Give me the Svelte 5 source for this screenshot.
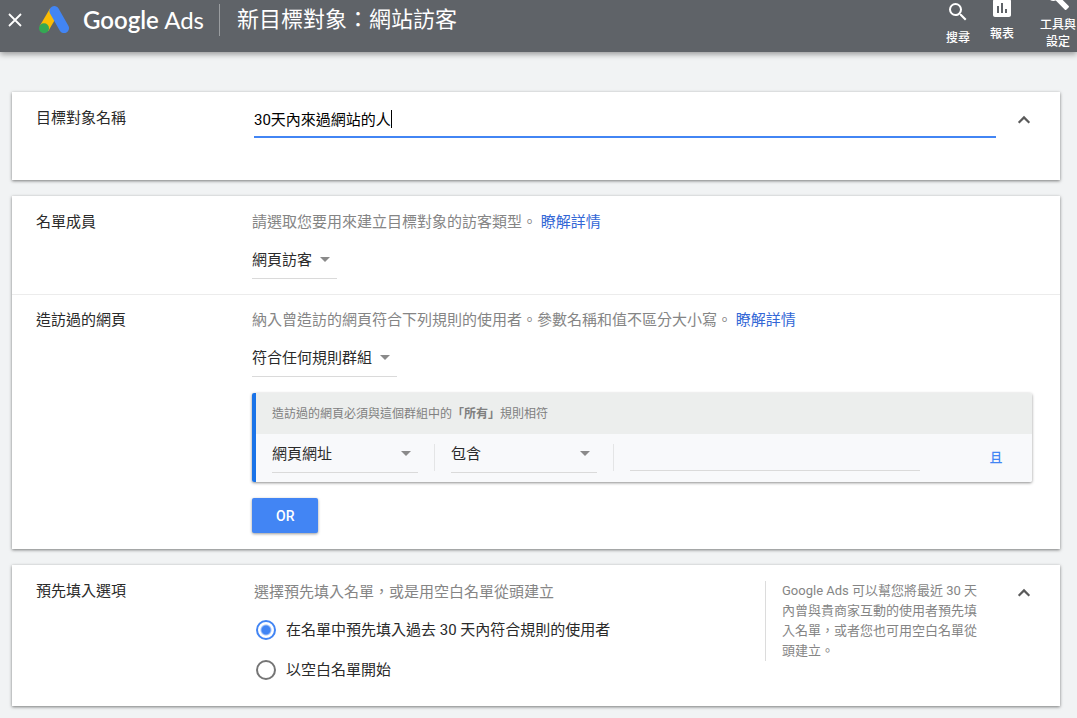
<script>
  let name = $state('30天內來過網站的人');
  let prefill = $state('past');
  let ruleValue = $state('');

  // collapsible cards
  let nameOpen = $state(true);
  let prefillOpen = $state(true);

  const prefillOptions = [
    { value: 'past', label: '在名單中預先填入過去 30 天內符合規則的使用者' },
    { value: 'empty', label: '以空白名單開始' }
  ];
</script>

{#snippet chevron()}
  <svg width="24" height="24" viewBox="0 0 24 24" aria-hidden="true">
    <path d="M6.700 14.700L12 9.400l5.300 5.300" fill="none" stroke="#5a5a5a" stroke-width="2.200" />
  </svg>
{/snippet}

{#snippet select(id, label, text, wide)}
  <div class="select" class:wide>
    <select {id} aria-label={label}>
      <option>{text}</option>
    </select>
    <svg class="arrow" width="10" height="5" viewBox="0 0 10 5" aria-hidden="true">
      <path d="M0 0h10L5 5z" fill="#8a8a8a" />
    </svg>
  </div>
{/snippet}

<header>
  <button class="close" aria-label="關閉">
    <svg width="14" height="14" viewBox="0 0 14 14">
      <path d="M1 1l12 12M13 1L1 13" stroke="#fff" stroke-width="1.8" />
    </svg>
  </button>
  <svg class="logo" width="30" height="28" viewBox="0 0 30 28" aria-hidden="true">
    <path d="M15.300 5L5 22.500" stroke="#fbbc04" stroke-width="10" />
    <path d="M15.300 5L25.100 22.200" stroke="#4285f4" stroke-width="9.800" stroke-linecap="round" />
    <circle cx="5" cy="22.300" r="5" fill="#34a853" />
  </svg>
  <span class="brand"><b>Google</b> Ads</span>
  <h1>新目標對象：網站訪客</h1>
  <nav>
    <button class="tool search">
      <svg width="24" height="24" viewBox="0 0 24 24">
        <path fill="#fff" d="M15.500 14h-.79l-.28-.27A6.471 6.471 0 0 0 16 9.500 6.500 6.500 0 1 0 9.500 16c1.610 0 3.090-.59 4.230-1.570l.27.28v.79l5 4.990L20.490 19l-4.990-5zm-6 0C7.010 14 5 11.990 5 9.500S7.010 5 9.500 5 14 7.010 14 9.500 11.990 14 9.500 14z" />
      </svg>
      <span>搜尋</span>
    </button>
    <button class="tool">
      <svg width="24" height="24" viewBox="0 0 24 24">
        <path fill="#fff" d="M19 3H5c-1.100 0-2 .9-2 2v14c0 1.100.9 2 2 2h14c1.100 0 2-.9 2-2V5c0-1.100-.9-2-2-2zM9 17H7v-7h2v7zm4 0h-2V7h2v10zm4 0h-2v-4h2v4z" />
      </svg>
      <span>報表</span>
    </button>
    <button class="tool last">
      <svg width="24" height="24" viewBox="0 0 24 24">
        <path fill="#fff" d="M22.700 19l-9.100-9.100c.9-2.300.4-5-1.500-6.900-2-2-5-2.400-7.400-1.300L9 6 6 9 1.600 4.700C.4 7.100.9 10.100 2.900 12.100c1.900 1.900 4.600 2.400 6.900 1.500l9.100 9.100c.4.4 1 .4 1.400 0l2.300-2.300c.5-.4.5-1.100.1-1.400z" />
      </svg>
      <span>工具與<br />設定</span>
    </button>
  </nav>
</header>

<main>
  <section class="card name-card">
    <div class="row">
      <label class="label" for="name">目標對象名稱</label>
      <div class="content indent">
        {#if nameOpen}
          <div class="name-field">
            <input id="name" type="text" bind:value={name} />
            <span class="caret"></span>
          </div>
        {/if}
      </div>
      <button class="toggle" aria-label="收合" onclick={() => (nameOpen = !nameOpen)}>
        {@render chevron()}
      </button>
    </div>
  </section>

  <section class="card">
    <div class="row">
      <label class="label" for="members">名單成員</label>
      <div class="content">
        <p class="hint">請選取您要用來建立目標對象的訪客類型。 <a href="#members">瞭解詳情</a></p>
        {@render select('members', '名單成員', '網頁訪客', false)}
      </div>
    </div>
    <div class="row divided">
      <label class="label" for="pages">造訪過的網頁</label>
      <div class="content">
        <p class="hint">納入曾造訪的網頁符合下列規則的使用者。參數名稱和值不區分大小寫。 <a href="#pages">瞭解詳情</a></p>
        {@render select('pages', '造訪過的網頁', '符合任何規則群組', false)}

        <div class="group">
          <div class="group-head">造訪過的網頁必須與這個群組中的<b>「所有」</b>規則相符</div>
          <div class="rule">
            {@render select('field', '欄位', '網頁網址', true)}
            <span class="sep"></span>
            {@render select('operator', '運算子', '包含', true)}
            <span class="sep"></span>
            <input class="rule-value" type="text" aria-label="值" bind:value={ruleValue} />
            <button class="and">且</button>
          </div>
        </div>
        <button class="or">OR</button>
      </div>
    </div>
  </section>

  <section class="card prefill-card">
    <div class="row">
      <div class="label">預先填入選項</div>
      <div class="content indent">
        {#if prefillOpen}
          <div class="prefill">
            <div class="choices">
              <p class="hint">選擇預先填入名單，或是用空白名單從頭建立</p>
              {#each prefillOptions as option}
                <label class="choice">
                  <input type="radio" name="prefill" value={option.value} bind:group={prefill} />
                  {option.label}
                </label>
              {/each}
            </div>
            <aside>Google Ads 可以幫您將最近 30 天內曾與貴商家互動的使用者預先填入名單，或者您也可用空白名單從頭建立。</aside>
          </div>
        {/if}
      </div>
      <button class="toggle" aria-label="收合" onclick={() => (prefillOpen = !prefillOpen)}>
        {@render chevron()}
      </button>
    </div>
  </section>
</main>

<style>
  :global(body) {
    background: #f1f3f4;
    color: #2a2a2a;
    font: 15px/20px Roboto, 'Noto Sans CJK TC', sans-serif;
    overflow-x: hidden;
  }
  button,
  input,
  select {
    font: inherit;
    color: inherit;
    background: none;
    border: none;
    border-radius: 0;
    margin: 0;
    padding: 0;
    outline: none;
  }
  button {
    cursor: pointer;
  }
  svg {
    display: block;
  }
  p {
    margin: 0;
  }

  /* top bar */
  header {
    display: flex;
    align-items: center;
    box-sizing: border-box;
    height: 52px;
    padding: 0 0 12px 8px;
    overflow: clip;
    overflow-clip-margin: 12px;
    background: #5f6368;
    color: #fff;
    box-shadow: 0 2px 6px rgba(0, 0, 0, 0.4);
  }
  .logo {
    margin: 0 14px 0 17px;
    flex: none;
  }
  .brand {
    font: 24px/32px Lato, sans-serif;
    padding-right: 15px;
    border-right: 1px solid #9a9da0;
    white-space: nowrap;
  }
  .brand b {
    font-weight: 600;
  }
  h1 {
    margin: 0 0 0 17px;
    font-size: 22px;
    line-height: 32px;
    font-weight: 400;
    white-space: nowrap;
  }
  nav {
    display: flex;
    align-items: center;
    height: 36px;
    margin-left: auto;
  }
  .tool {
    display: flex;
    flex-direction: column;
    align-items: center;
    gap: 6px;
    padding: 0 10px 2px;
    font-size: 12px;
    line-height: 17px;
    font-weight: 500;
    white-space: nowrap;
  }
  .tool.search {
    padding-top: 8px;
  }
  .tool.last {
    padding: 0 1px 2px 16px;
  }

  /* cards */
  main {
    display: flex;
    flex-direction: column;
    gap: 16px;
    padding: 40px 17px 12px 12px;
  }
  .card {
    background: #fff;
    box-shadow: 0 1px 3px rgba(0, 0, 0, 0.5);
  }
  .row {
    display: flex;
    padding: 16px 28px 15px 24px;
  }
  .row.divided {
    padding: 15px 28px 16px 24px;
    border-top: 1px solid #ececec;
  }
  .label {
    flex: none;
    width: 216px;
  }
  .content {
    flex: 1;
    min-width: 0;
  }
  .indent {
    padding-left: 2px;
  }
  .toggle {
    align-self: flex-start;
    width: 24px;
    height: 24px;
    margin-left: 16px;
  }
  .hint {
    color: #858585;
    margin-bottom: 8px;
  }
  a {
    color: #3367d6;
    text-decoration: none;
  }

  .name-card .row {
    padding: 12px 24px 42px;
  }
  .name-card .label {
    margin-top: 4px;
  }
  .name-card .toggle {
    margin-top: 4px;
  }
  .name-field {
    display: flex;
    align-items: center;
    box-sizing: border-box;
    height: 34px;
    padding-bottom: 3px;
    border-bottom: 2px solid #4285f4;
    color: #000;
  }
  .name-field input {
    field-sizing: content;
    height: 28px;
  }
  .caret {
    width: 1px;
    height: 18px;
    background: #000;
  }

  .select {
    position: relative;
    width: fit-content;
    border-bottom: 1px solid #dadada;
  }
  .select.wide {
    width: 146px;
  }
  select {
    display: block;
    appearance: none;
    box-sizing: border-box;
    height: 38px;
    padding: 2px 24px 0 0;
  }
  .wide select {
    width: 100%;
  }
  .arrow {
    position: absolute;
    right: 7px;
    top: 17px;
    pointer-events: none;
  }

  /* rule group */
  .group {
    margin: 16px 0;
    border-left: 4px solid #1a73e8;
    border-radius: 2px;
    box-shadow: 0 1px 3px rgba(0, 0, 0, 0.45);
    overflow: hidden;
  }
  .group-head {
    padding: 1px 16px 0;
    background: #eceeed;
    color: #808080;
    font-size: 12px;
    line-height: 40px;
  }
  .group-head b {
    font-weight: 700;
  }
  .rule {
    display: flex;
    align-items: flex-start;
    height: 48px;
    padding-left: 16px;
    background: #f8f9fb;
  }
  .sep {
    width: 1px;
    height: 27px;
    margin: 10px 16px 0;
    background: #e4e5e6;
  }
  .rule-value {
    flex: 1;
    min-width: 0;
    height: 36px;
    border-bottom: 1px solid #dadada;
  }
  .and {
    width: 72px;
    height: 48px;
    margin-left: 40px;
    color: #4285f4;
    font-size: 13px;
    font-weight: 500;
  }
  .or {
    display: block;
    height: 35px;
    padding: 0 24px;
    border-radius: 2px;
    background: #4285f4;
    color: #fff;
    font-size: 14px;
    font-weight: 500;
    box-shadow: 0 1px 3px rgba(0, 0, 0, 0.4);
  }

  /* prefill */
  .prefill-card .row {
    padding: 16px 24px;
  }
  .prefill {
    display: flex;
  }
  .choices {
    flex: 1;
    padding-top: 1px;
  }
  .choice {
    display: flex;
    align-items: center;
    gap: 10px;
    height: 40px;
    padding-left: 2px;
  }
  .choice input {
    appearance: none;
    box-sizing: border-box;
    width: 20px;
    height: 20px;
    border: 2px solid #757575;
    border-radius: 50%;
  }
  .choice input:checked {
    border-color: #4285f4;
    background: radial-gradient(circle, #4285f4 4px, transparent 6px);
  }
  aside {
    box-sizing: border-box;
    width: 231px;
    height: 80px;
    padding: 0 16px;
    border-left: 1px solid #dcdcdc;
    color: #858585;
    font-size: 13px;
  }
</style>
